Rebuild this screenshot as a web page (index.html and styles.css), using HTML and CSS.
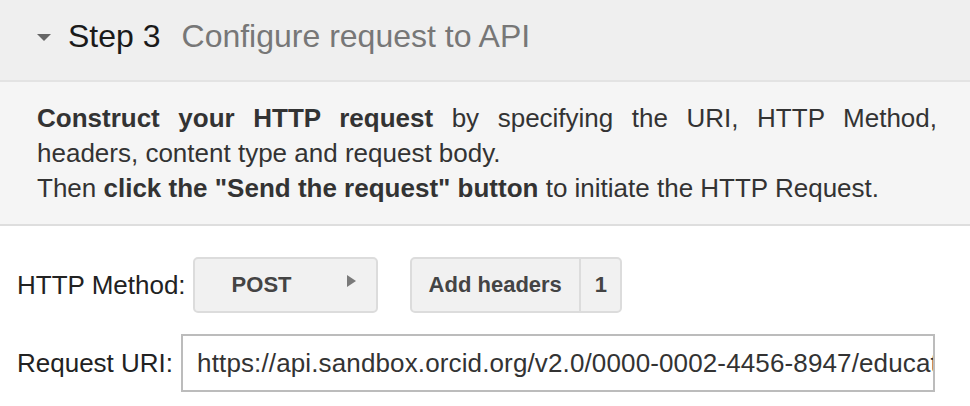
FILE: index.html
```html
<!DOCTYPE html>
<html>
<head>
<meta charset="utf-8">
<link rel="stylesheet" href="styles.css">
</head>
<body>
<div class="step">
  <div class="step-header">
    <svg class="caret" width="14" height="8" viewBox="0 0 14 8"><path d="M0 0 L14 0 L7 7 Z" fill="#666"/></svg>
    <span class="step-num">Step 3</span>
    <span class="step-title">Configure request to API</span>
  </div>
  <div class="step-desc">
    <p><b>Construct your HTTP request</b> by specifying the URI, HTTP Method, headers, content type and request body.<br>Then <b>click the "Send the request" button</b> to initiate the HTTP Request.</p>
  </div>
  <div class="step-body">
    <div class="row row-method">
      <span class="label">HTTP Method:</span>
      <button class="btn btn-method">POST<svg class="arrow" width="9" height="12" viewBox="0 0 9 12"><path d="M0 0 L9 6 L0 12 Z" fill="#7a7a7a"/></svg></button>
      <div class="btn-group">
        <button class="btn btn-headers">Add headers</button>
        <button class="btn btn-count">1</button>
      </div>
    </div>
    <div class="row row-uri">
      <span class="label">Request URI:</span>
      <div class="uri-input">https://api.sandbox.orcid.org/v2.0/0000-0002-4456-8947/education</div>
    </div>
  </div>
</div>
</body>
</html>
```
FILE: styles.css
```css
html, body {
  margin: 0;
  padding: 0;
  background: #ffffff;
}
body {
  font-family: "Liberation Sans", Arial, sans-serif;
  color: #222;
  width: 970px;
  height: 406px;
  overflow: hidden;
}
.step-header {
  height: 80px;
  background: #efefef;
  border-bottom: 2px solid #e3e3e3;
  display: flex;
  align-items: center;
  padding-left: 37px;
  font-size: 32px;
}
.caret {
  margin-right: 17px;
  margin-top: -5px;
}
.step-num {
  color: #1a1a1a;
  margin-top: -8px;
}
.step-title {
  color: #777;
  margin-left: 21px;
  margin-top: -8px;
}
.step-desc {
  background: #f5f5f5;
  border-bottom: 2px solid #dedede;
  padding: 19px 33px 18px 37px;
}
.step-desc p {
  margin: 0;
  font-size: 26px;
  line-height: 35px;
  color: #333;
  text-align: justify;
}
.step-body {
  padding: 31px 0 0 17px;
}
.row {
  display: flex;
  align-items: center;
  gap: 7px;
  font-size: 26px;
}
.row-uri {
  margin-top: 21px;
  gap: 8px;
}
.label {
  color: #222;
}
.btn {
  font-family: "Liberation Sans", Arial, sans-serif;
  font-size: 22px;
  font-weight: bold;
  color: #444;
  background: #f1f1f1;
  border: 2px solid #dcdcdc;
  border-radius: 5px;
  height: 56px;
  box-sizing: border-box;
  padding: 0 18px;
  margin: 0;
  display: flex;
  align-items: center;
  white-space: nowrap;
}
.btn-method {
  width: 185px;
  padding-left: 37px;
  position: relative;
}
.arrow {
  position: absolute;
  right: 20px;
  top: 16px;
}
.btn-group {
  display: flex;
  margin-left: 25px;
}
.btn-headers {
  border-radius: 5px 0 0 5px;
  padding: 0 17px 0 17px;
}
.btn-count {
  border-left: 2px solid #dcdcdc;
  margin-left: -2px;
  border-radius: 0 5px 5px 0;
  width: 43px;
  padding: 0 0 0 14px;
}
.uri-input {
  width: 754px;
  height: 58px;
  box-sizing: border-box;
  border: 2px solid #bcbcbc;
  padding: 0 0 0 14px;
  display: flex;
  align-items: center;
  white-space: nowrap;
  overflow: hidden;
  color: #333;
  font-size: 26px;
  letter-spacing: 0.13px;
}
```
